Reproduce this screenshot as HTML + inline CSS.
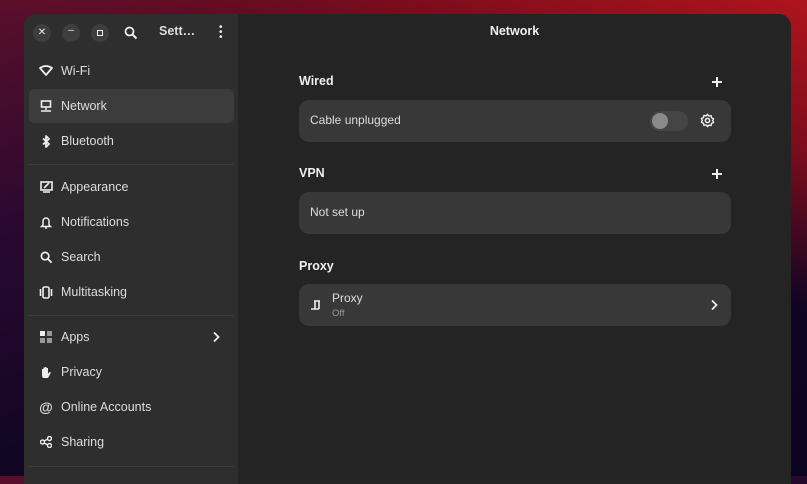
<!DOCTYPE html>
<html><head><style>
*{margin:0;padding:0;box-sizing:border-box}
body{width:807px;height:476px;overflow:hidden;font-family:"Liberation Sans","DejaVu Sans",sans-serif;background:linear-gradient(160deg,#5a0f2a 0%,#2a0830 30%,#120624 60%,#0b0420 100%);position:relative}
.bgr{position:absolute;right:0;top:0;width:807px;height:476px;background:linear-gradient(200deg,#b0141c 0%,#7a0c1c 20%,transparent 40%)}
.win{position:absolute;left:24px;top:14px;width:767px;height:470px;border-radius:12px 12px 0 0;overflow:hidden;background:#242424}
.side{position:absolute;left:0;top:0;width:214px;height:100%;background:#2e2e2e;color:#ddd;font-size:12.5px}
.hb{position:absolute;top:10px;width:18px;height:18px;border-radius:50%;background:#3e3e3e;color:#eee;font-size:10px;text-align:center;line-height:18px}
.item{position:absolute;left:5px;width:205px;height:34px;border-radius:6px;display:flex;align-items:center;padding-left:10px}
.item .ic{width:14px;height:14px;margin-right:8px;display:flex;align-items:center;justify-content:center}
.sep{position:absolute;left:4px;width:206px;height:1px;background:#3c3c3c}
.main{position:absolute;left:214px;top:0;right:0;bottom:0;color:#eee}
.h{position:absolute;font-weight:bold;font-size:12.5px}
.card{position:absolute;left:61px;width:432px;height:42px;background:#383838;border-radius:10px;font-size:12px;color:#ddd}
.plus{position:absolute;left:474px;font-size:16px;font-weight:bold}
</style></head><body><div class="bgr"></div>
<div class="win">
<div class="side">
<div class="hb" style="left:9px">✕</div>
<div class="hb" style="left:38px;line-height:14px">–</div>
<div class="hb" style="left:67px"><div style="width:6px;height:6px;border:1.5px solid #eee;margin:6px auto"></div></div>
<svg style="position:absolute;left:100px;top:12px" width="14" height="14" viewBox="0 0 14 14"><circle cx="5.5" cy="5.5" r="4" stroke="#eee" stroke-width="1.8" fill="none"/><path d="M8.5 8.5L12.5 12.5" stroke="#eee" stroke-width="2"/></svg>
<div style="position:absolute;left:135px;top:10px;font-weight:bold;font-size:12.5px;color:#ddd">Sett…</div>
<div style="position:absolute;left:195px;top:11px;width:3px;line-height:5px;color:#eee;font-size:10px">•<br>•<br>•</div>
<div class="item" style="top:40px"><span class="ic"><svg width="14" height="12" viewBox="0 0 14 12"><path d="M1 3Q7-1 13 3L7 10Z" fill="none" stroke="#eee" stroke-width="1.8" stroke-linejoin="round"/></svg></span>Wi-Fi</div>
<div class="item" style="top:75px;background:#3c3c3c"><span class="ic"><svg width="12" height="12" viewBox="0 0 12 12"><rect x="1.5" y="1" width="9" height="6" fill="none" stroke="#eee" stroke-width="1.6"/><path d="M6 7v3M1 11h10" stroke="#eee" stroke-width="1.5"/></svg></span>Network</div>
<div class="item" style="top:110px"><span class="ic"><svg width="10" height="13" viewBox="0 0 10 13"><path d="M2 3.5l6 5.5-3 3V1l3 3-6 5.5" fill="none" stroke="#eee" stroke-width="1.8" stroke-linejoin="round"/></svg></span>Bluetooth</div>
<div class="sep" style="top:150px"></div>
<div class="item" style="top:156px"><span class="ic"><svg width="13" height="12" viewBox="0 0 13 12"><rect x="1" y="1" width="11" height="8" fill="none" stroke="#eee" stroke-width="1.6"/><path d="M4 7l5-5M3 11h7" stroke="#eee" stroke-width="1.6"/></svg></span>Appearance</div>
<div class="item" style="top:191px"><span class="ic"><svg width="12" height="13" viewBox="0 0 12 13"><path d="M3 9V5a3 3 0 0 1 6 0v4l1.5 1.5h-9Z" fill="none" stroke="#eee" stroke-width="1.5"/><path d="M5 12h2" stroke="#eee" stroke-width="1.5"/></svg></span>Notifications</div>
<div class="item" style="top:226px"><span class="ic"><svg width="13" height="13" viewBox="0 0 14 14"><circle cx="5.5" cy="5.5" r="4" stroke="#eee" stroke-width="1.8" fill="none"/><path d="M8.5 8.5L12.5 12.5" stroke="#eee" stroke-width="2"/></svg></span>Search</div>
<div class="item" style="top:261px"><span class="ic"><svg width="14" height="13" viewBox="0 0 14 13"><rect x="4" y="1" width="6" height="11" rx="1.5" fill="none" stroke="#eee" stroke-width="1.6"/><path d="M1.5 3v7M12.5 3v7" stroke="#eee" stroke-width="1.6"/></svg></span>Multitasking</div>
<div class="sep" style="top:301px"></div>
<div class="item" style="top:306px"><span class="ic"><svg width="12" height="12" viewBox="0 0 12 12"><rect x="0" y="0" width="5" height="5" fill="#eee"/><rect x="7" y="0" width="5" height="5" fill="#999"/><rect x="0" y="7" width="5" height="5" fill="#999"/><rect x="7" y="7" width="5" height="5" fill="#999"/></svg></span>Apps<svg style="position:absolute;right:14px" width="8" height="12" viewBox="0 0 8 12"><path d="M2 1.5l4.5 4.5-4.5 4.5" fill="none" stroke="#eee" stroke-width="1.8"/></svg></div>
<div class="item" style="top:341px"><span class="ic"><svg width="12" height="13" viewBox="0 0 12 13"><path d="M2 6V3h1.5v3V1.5H5V6V1h1.5v5V2H8v6l1.5-2 1.5.5L8 12H3Q2 11 2 9Z" fill="#eee"/></svg></span>Privacy</div>
<div class="item" style="top:376px"><span class="ic" style="font-weight:bold;font-size:14px">@</span>Online Accounts</div>
<div class="item" style="top:411px"><span class="ic"><svg width="12" height="12" viewBox="0 0 12 12"><circle cx="9.5" cy="2.5" r="2" fill="none" stroke="#eee" stroke-width="1.4"/><circle cx="2.5" cy="6" r="2" fill="none" stroke="#eee" stroke-width="1.4"/><circle cx="9.5" cy="9.5" r="2" fill="none" stroke="#eee" stroke-width="1.4"/><path d="M4 5l4-2M4 7l4 2" stroke="#eee" stroke-width="1.4"/></svg></span>Sharing</div>
<div class="sep" style="top:452px"></div>
</div>
<div class="main">
<div style="position:absolute;left:0;right:0;top:10px;text-align:center;font-weight:bold;font-size:12.5px">Network</div>
<div class="h" style="left:61px;top:60px">Wired</div>
<svg class="plus" style="top:63px" width="10" height="10" viewBox="0 0 10 10"><path d="M5 0v10M0 5h10" stroke="#eee" stroke-width="2"/></svg>
<div class="card" style="top:86px"><span style="position:absolute;left:11px;top:13px">Cable unplugged</span>
<div style="position:absolute;left:351px;top:11px;width:38px;height:20px;border-radius:10px;background:#454545"><div style="width:16px;height:16px;border-radius:50%;background:#8a8a8a;margin:2px"></div></div>
<svg style="position:absolute;left:401px;top:13px" width="15" height="15" viewBox="0 0 16 16"><circle cx="8" cy="8" r="2.3" fill="none" stroke="#eee" stroke-width="1.6"/><path d="M8 1.5l1.5 1.8 2.3-.5.5 2.3 2.2 1-1 2 1 2-2.2 1-.5 2.3-2.3-.5L8 14.5l-1.5-1.8-2.3.5-.5-2.3-2.2-1 1-2-1-2 2.2-1 .5-2.3 2.3.5Z" fill="none" stroke="#eee" stroke-width="1.5" stroke-linejoin="round"/></svg></div>
<div class="h" style="left:61px;top:152px">VPN</div>
<svg class="plus" style="top:155px" width="10" height="10" viewBox="0 0 10 10"><path d="M5 0v10M0 5h10" stroke="#eee" stroke-width="2"/></svg>
<div class="card" style="top:178px"><span style="position:absolute;left:11px;top:13px">Not set up</span></div>
<div class="h" style="left:61px;top:245px">Proxy</div>
<div class="card" style="top:270px"><svg style="position:absolute;left:11px;top:14px" width="12" height="13" viewBox="0 0 12 13"><path d="M4 3h6M5 3v8M9 3v8M1 11h8" stroke="#eee" stroke-width="1.6" fill="none"/></svg>
<span style="position:absolute;left:33px;top:7px">Proxy</span><span style="position:absolute;left:33px;top:24px;font-size:9.5px;color:#999">Off</span>
<svg style="position:absolute;left:411px;top:15px" width="8" height="12" viewBox="0 0 8 12"><path d="M2 1.5l4.5 4.5-4.5 4.5" fill="none" stroke="#eee" stroke-width="1.8"/></svg></div>
</div>
</div>
</body></html>
